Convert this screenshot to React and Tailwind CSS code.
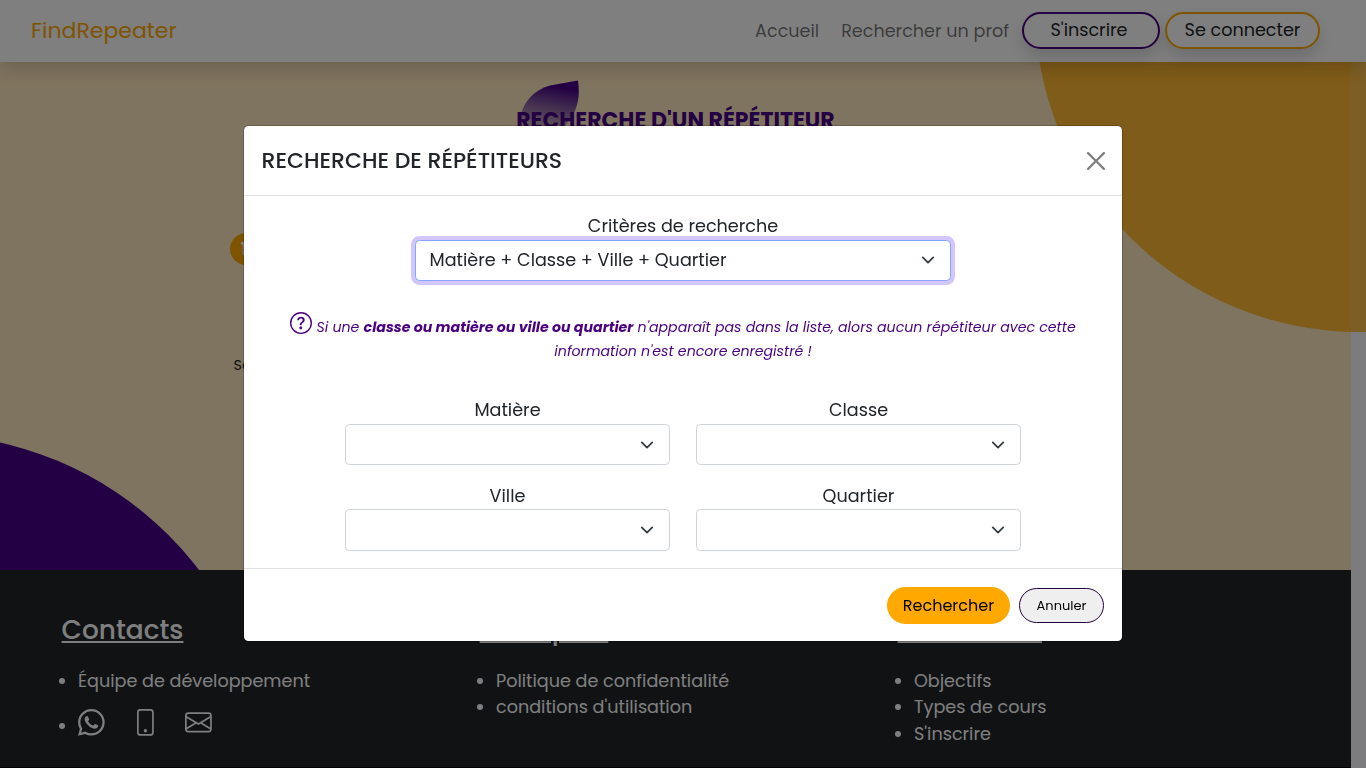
import { BsWhatsapp, BsPhone, BsEnvelope, BsQuestionCircle } from "react-icons/bs";

function Chevron() {
  return (
    <svg viewBox="0 0 16 16" className="size-[14px] shrink-0" fill="none" stroke="#343a40" strokeWidth="2" strokeLinecap="round" strokeLinejoin="round">
      <path d="m2 5 6 6 6-6" />
    </svg>
  );
}

function Field({ label }) {
  return (
    <label className="flex flex-col text-center">
      <span>{label}</span>
      <span className="flex h-[41.6px] items-center justify-end rounded-[4.4px] border border-[#ced4da] bg-white pr-[15px]">
        <Chevron />
      </span>
    </label>
  );
}

function FooterColumn({ title, children }) {
  return (
    <section className="w-[418px]">
      <h2 className="text-[26.4px] leading-[31.7px] font-medium underline">{title}</h2>
      <ul className="mt-[22.4px] list-disc pl-[16.4px]">{children}</ul>
    </section>
  );
}

export default function App() {
  return (
    <div className="relative h-[768px] w-[1366px] overflow-hidden bg-[#f8f8ff] font-[Poppins,Inter,sans-serif] text-[17.6px] leading-[26.4px] text-[#212529]">
      <header className="relative z-10 flex h-[62px] items-center bg-white pr-[46px] pb-px pl-[31px] shadow-[0_8px_16px_rgba(0,0,0,0.15)]">
        <span className="text-[22px] leading-[33px] text-[#ffa800]">FindRepeater</span>
        <nav className="ml-auto flex items-center text-black/55">
          <a className="mr-[22px] pt-px">Accueil</a>
          <a className="mr-[13px] pt-px">Rechercher un prof</a>
          <a className="mr-[5px] flex h-[37px] w-[138px] items-center justify-center rounded-[20px] border-2 border-[#4b0082] pr-1 text-[#212529] shadow-[0_8px_16px_rgba(0,0,0,0.15)]">S'inscrire</a>
          <a className="flex h-[37px] w-[155px] items-center justify-center rounded-[20px] border-2 border-[#ffa800] text-[#212529] shadow-[0_8px_16px_rgba(0,0,0,0.15)]">Se connecter</a>
        </nav>
      </header>

      <div className="absolute top-[-316px] left-[1035px] size-[648px] rounded-full bg-[#fabe4a]" />
      <main className="relative h-[508px] w-[1351px] overflow-hidden bg-[#ffe8be]">
        <div className="absolute top-[-378px] left-[1035px] size-[648px] rounded-full bg-[#ffb832]" />
        <div className="absolute top-[371.5px] left-[-422.5px] size-[692px] rounded-full bg-[#470087]" />
        <svg className="absolute top-[16px] left-[518px] h-[60px] w-[64px]" viewBox="0 0 64 60">
          <defs>
            <linearGradient id="leaf" x1="0.6" y1="0" x2="0.4" y2="1">
              <stop offset="0.1" stopColor="#470087" />
              <stop offset="0.85" stopColor="#5a3a9c" stopOpacity="0.35" />
            </linearGradient>
          </defs>
          <path d="M60 2.5C62 18 60 27 55 37L40 58L0 52C2 24 16 12 32 7.5Z" fill="url(#leaf)" />
        </svg>
        <h1 className="relative mt-[42px] text-center text-[22px] leading-[33px] font-bold text-[#470087]">RECHERCHE D'UN RÉPÉTITEUR</h1>
        <div className="relative mt-[96px] ml-[230px] flex size-8 items-center justify-center rounded-full bg-[#ffa800] pr-1 font-bold text-white">1</div>
        <p className="relative mt-[87px] ml-[233.5px] text-[14.4px]">Sélectionnez</p>
      </main>

      <footer className="flex h-[198px] w-[1351px] border-b border-black bg-[#212529] pt-[43.7px] pl-[61.6px] text-white">
        <FooterColumn title="Contacts">
          <li>Équipe de développement</li>
          <li className="pt-[13px] leading-[38px]">
            <BsWhatsapp className="mr-[26.8px] inline size-[26.8px] align-[-4px]" />
            <BsPhone className="mr-[26.8px] inline size-[26.8px] align-[-4px]" />
            <BsEnvelope className="inline size-[26.8px] align-[-4px]" />
          </li>
        </FooterColumn>
        <FooterColumn title={<span className="tracking-[0.35px]">Exemples</span>}>
          <li>Politique de confidentialité</li>
          <li>conditions d'utilisation</li>
        </FooterColumn>
        <FooterColumn title="Liens utiles">
          <li>Objectifs</li>
          <li>Types de cours</li>
          <li>S'inscrire</li>
        </FooterColumn>
      </footer>

      <div className="fixed inset-0 z-20 flex items-start justify-center bg-black/50 pt-[125px]">
        <div role="dialog" className="flex h-[517px] w-[880px] flex-col rounded-[5.3px] border border-black/20 bg-white bg-clip-padding">
          <div className="flex h-[70px] items-center justify-between border-b border-[#dee2e6] px-[17.6px]">
            <h5 className="text-[22px] leading-[33px] font-medium">RECHERCHE DE RÉPÉTITEURS</h5>
            <svg viewBox="0 0 16 16" className="-mr-px size-[18px] opacity-50">
              <path d="M.293.293a1 1 0 0 1 1.414 0L8 6.586 14.293.293a1 1 0 1 1 1.414 1.414L9.414 8l6.293 6.293a1 1 0 0 1-1.414 1.414L8 9.414l-6.293 6.293a1 1 0 0 1-1.414-1.414L6.586 8 .293 1.707a1 1 0 0 1 0-1.414z" />
            </svg>
          </div>
          <div className="flex h-[372px] flex-col items-center pt-[17.4px]">
            <label className="flex w-[536px] flex-col text-center">
              <span>Critères de recherche</span>
              <span className="flex h-[41.4px] items-center justify-between rounded-[4.4px] border border-[#86a4fe] bg-white pr-[15px] pl-[13.5px] shadow-[0_0_0_4px_#d2c6fd]">
                Matière + Classe + Ville + Quartier
                <Chevron />
              </span>
            </label>
            <p className="mt-[31px] w-[800px] text-center text-[14.17px] leading-6 text-[#4b0082] italic">
              <BsQuestionCircle className="inline size-[22px] align-[-2px]" /> Si une <b className="font-bold">classe ou matière ou ville ou quartier</b> n'apparaît pas dans la liste, alors aucun répétiteur avec cette information n'est encore enregistré !
            </p>
            <div className="mt-auto mb-[17.1px] grid w-[676px] grid-cols-2 gap-x-[26px] gap-y-[17.6px]">
              <Field label="Matière" />
              <Field label="Classe" />
              <Field label="Ville" />
              <Field label="Quartier" />
            </div>
          </div>
          <div className="flex flex-1 items-center justify-end gap-[9px] border-t border-[#dee2e6] pr-[18px]">
            <button className="h-[37px] w-[123px] rounded-[20px] bg-[#ffa800] pt-0.5 text-base text-black">Rechercher</button>
            <button className="h-[35px] w-[85px] rounded-[20px] border border-[#250041] bg-[#efefef] pt-0.5 text-[13px] text-black">Annuler</button>
          </div>
        </div>
      </div>
    </div>
  );
}
